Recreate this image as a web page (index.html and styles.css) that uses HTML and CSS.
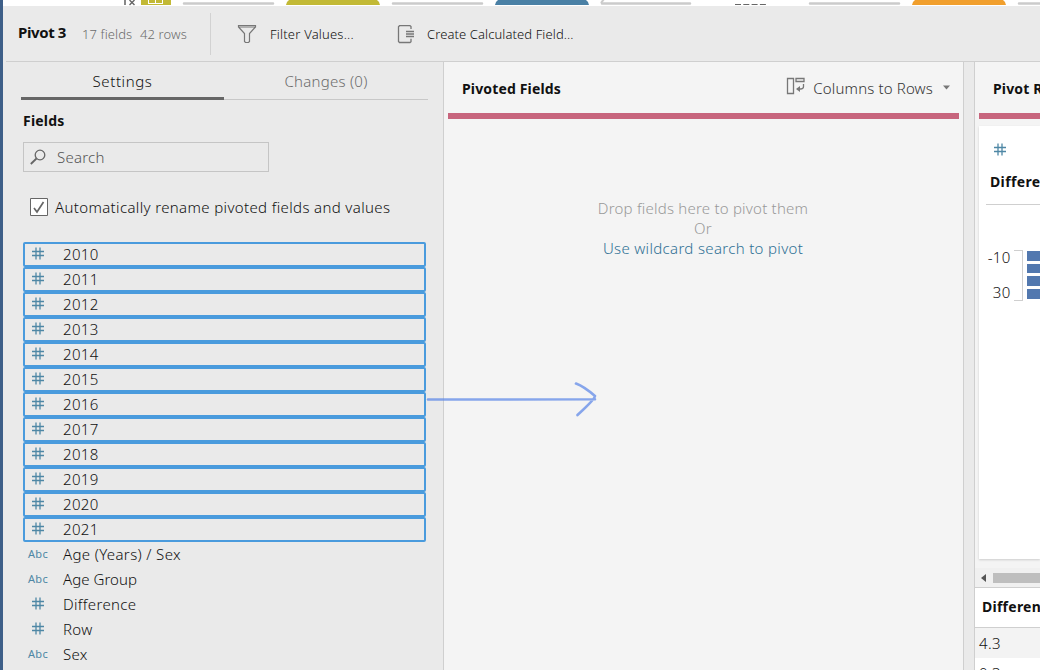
FILE: index.html
```html
<!DOCTYPE html>
<html lang="en">
<head>
<meta charset="utf-8">
<title>Pivot 3</title>
<link rel="stylesheet" href="styles.css">
</head>
<body>
<svg class="defs" width="0" height="0">
  <symbol id="hash" viewBox="0 0 14 14"><path d="M1 4.500h12M1 8.500h12M5 .5v12M9 .5v12" fill="none" stroke="#4e87a5" stroke-width="1.300"/></symbol>
</svg>
<div class="app">
  <svg class="flow" width="1037" height="6" viewBox="3 0 1037 6">
    <path d="M125 0v5" stroke="#555" stroke-width="1.400"/><path d="M129.500 5l5-5M134.500 5l-5-5" stroke="#666" stroke-width="1.400" fill="none"/>
    <path d="M141 0h30v5h-30z" fill="#c2b935"/>
    <path d="M148.500 0v4M155.500 0v4M162.500 0v4M148 3.500h15" stroke="#fff" fill="none"/>
    <path d="M184 3.500h89M393 3.500h89M602 3.500h88M810 3.500h89M1019 3.500h40" stroke="#cbcbcb" stroke-width="2.500" stroke-linecap="round"/>
    <path d="M601 3l3-4" stroke="#cbcbcb" stroke-width="2"/>
    <path d="M286 5q0-3 3-5h88q3 2 3 5z" fill="#c2b935"/>
    <path d="M495 5q0-3 3-5h88q3 2 3 5z" fill="#4a80a5"/>
    <path d="M912 5q0-3 3-5h88q3 2 3 5z" fill="#f19f2d"/>
    <path d="M735 4.500h31" stroke="#666" stroke-dasharray="6 2.300"/>
  </svg>
  <header class="toolbar">
    <div class="summary"><b class="title">Pivot 3</b><span class="count fields-count">17 fields</span><span class="count rows-count">42 rows</span></div>
    <div class="action filter">
      <svg width="20" height="20" viewBox="0 0 20 20"><path d="M1.500 1.500h17v1.500l-6 6.500v8l-1 1h-3l-1-1v-8l-6-6.500zM2 3h16" fill="none" stroke="#777" stroke-width="1.200"/></svg>
      <span class="filter-text">Filter Values...</span>
    </div>
    <div class="action calc">
      <svg width="18" height="20" viewBox="0 0 18 20"><path d="M14 5V2.500l-1-.8H2.500l-1 1v14.800l1 1H13l1-.8v-3M9 7.500h8M9 10h8M9 12.500h8" fill="none" stroke="#777" stroke-width="1.300"/></svg>
      <span class="calc-text">Create Calculated Field...</span>
    </div>
  </header>
  <main class="workspace">
    <section class="settings">
      <nav class="tabs"><span class="tab active"><span>Settings</span></span><span class="tab changes"><span>Changes (0)</span></span></nav>
      <h2 class="fields-title"><span>Fields</span></h2>
      <div class="search"><svg width="16" height="16" viewBox="0 0 16 16"><circle cx="10" cy="6" r="4.800" fill="none" stroke="#666" stroke-width="1.300"/><path d="M6.500 9.500L.8 15" stroke="#666" stroke-width="1.800"/></svg><span>Search</span></div>
      <div class="rename"><svg width="18" height="18" viewBox="0 0 18 18"><path d="M.5.500h17v17H.5z" fill="#fff" stroke="#666"/><path d="M4 10l3 4 6.500-10" fill="none" stroke="#666" stroke-width="1.700"/></svg><span>Automatically rename pivoted fields and values</span></div>
      <ul class="fields">
        <li class="selected"><svg><use href="#hash"/></svg><span>2010</span></li>
        <li class="selected"><svg><use href="#hash"/></svg><span>2011</span></li>
        <li class="selected"><svg><use href="#hash"/></svg><span>2012</span></li>
        <li class="selected"><svg><use href="#hash"/></svg><span>2013</span></li>
        <li class="selected"><svg><use href="#hash"/></svg><span>2014</span></li>
        <li class="selected"><svg><use href="#hash"/></svg><span>2015</span></li>
        <li class="selected"><svg><use href="#hash"/></svg><span>2016</span></li>
        <li class="selected"><svg><use href="#hash"/></svg><span>2017</span></li>
        <li class="selected"><svg><use href="#hash"/></svg><span>2018</span></li>
        <li class="selected"><svg><use href="#hash"/></svg><span>2019</span></li>
        <li class="selected"><svg><use href="#hash"/></svg><span>2020</span></li>
        <li class="selected"><svg><use href="#hash"/></svg><span>2021</span></li>
        <li><i>Abc</i><span class="age-sex">Age (Years) / Sex</span></li>
        <li><i>Abc</i><span class="age-group">Age Group</span></li>
        <li><svg><use href="#hash"/></svg><span class="difference">Difference</span></li>
        <li><svg><use href="#hash"/></svg><span>Row</span></li>
        <li><i>Abc</i><span class="sex">Sex</span></li>
      </ul>
    </section>
    <section class="pivoted">
      <header class="panel-head">
        <b>Pivoted Fields</b>
        <div class="mode">
          <svg width="19" height="18" viewBox="0 0 19 18"><path d="M1.500 1.500h6v15h-6zM10 1.500h8v3h-8zM17.500 7v2.500q0 2.500-3 2.500h-3" fill="none" stroke="#777" stroke-width="1.300"/><path d="M10 12l4-3v6z" fill="#777"/></svg>
          <span>Columns to Rows</span>
          <svg class="caret" width="7" height="5" viewBox="0 0 7 5"><path d="M0 .5h7L3.500 4.500z" fill="#777"/></svg>
        </div>
      </header>
      <div class="accent"></div>
      <div class="drop"><span>Drop fields here to pivot them</span><span>Or</span><a>Use wildcard search to pivot</a></div>
    </section>
    <section class="results">
      <header class="panel-head"><b class="results-title">Pivot Results</b></header>
      <div class="accent"></div>
      <div class="card">
        <svg class="card-icon"><use href="#hash"/></svg>
        <b class="card-title">Difference</b>
        <div class="histogram">
          <div class="axis"><span>-10</span><span>30</span></div>
          <div class="bracket"></div>
          <div class="bars"><i></i><i></i><i></i><i></i></div>
        </div>
      </div>
      <div class="scroll"><svg width="5" height="8" viewBox="0 0 5 8"><path d="M5 0v8L0 4z" fill="#555"/></svg><div class="thumb"></div></div>
      <div class="grid-head"><b>Difference</b></div>
      <div class="grid-row shaded">4.3</div>
      <div class="grid-row">0.3</div>
    </section>
  </main>
  <svg class="arrow" width="174" height="40" viewBox="426 378 174 40"><path d="M428 399.500h70l97-.3M576 383.500q8 3 19 12.500q0 3-17.500 19" fill="none" stroke="#5b86e8" stroke-opacity=".72" stroke-width="2.600" stroke-linecap="round"/></svg>
</div>
</body>
</html>
```
FILE: styles.css
```css
* { box-sizing: border-box; }
body { margin: 0; font-family: "Noto Sans", sans-serif; font-size: 15px; font-weight: 300; color: #111; }
b { font-weight: 700; }
.defs { position: absolute; }
.app { width: 1040px; height: 670px; overflow: hidden; display: flex; flex-direction: column; border-left: 3px solid #3e5f88; background: #eaeaea; position: relative; }
.flow { display: block; flex: none; background: #fff; }
.toolbar { height: 55px; flex: none; display: flex; white-space: nowrap; }
.summary { width: 208px; height: 42px; margin-top: 7px; padding-left: 15px; border-right: 1px solid #d2d2d2; display: flex; line-height: 40px; }
.title { width: 64px; color: #111; font-size: 15px; line-height: 38px; letter-spacing: -.4px; }
.count { font-size: 13px; color: #6c6c6c; line-height: 43px; letter-spacing: .1px; }
.fields-count { width: 58px; }
.action { display: flex; font-size: 13px; line-height: 56px; }
.action svg { margin-top: 18px; }
.filter { padding-left: 26px; width: 186px; gap: 13px; letter-spacing: .2px; }
.calc { gap: 12px; letter-spacing: .1px; }
.workspace { flex: 1; min-height: 0; margin-left: 3px; border-top: 1px solid #cfcfcf; display: flex; }
.settings { width: 437px; padding: 0 15px; flex: none; white-space: nowrap; }
.tabs { display: flex; height: 38px; line-height: 38px; text-align: center; }
.tab { width: 203px; flex: none; color: #6c6c6c; border-bottom: 1px solid #c8c8c8; letter-spacing: .25px; }
.tab.changes { width: 204px; }
.tab.active { color: #111; border-bottom: 3px solid #666; letter-spacing: .6px; }
.fields-title { margin: 11px 0 0 2px; height: 20px; line-height: 20px; font-size: 14px; letter-spacing: .2px; color: #111; }
.search { margin: 11px 0 0 2px; width: 246px; height: 30px; border: 1px solid #c5c5c5; display: flex; align-items: center; padding-left: 6px; gap: 11px; color: #555; letter-spacing: .25px; }
.rename { display: flex; align-items: center; height: 22px; margin: 24px 0 0 9px; gap: 7px; letter-spacing: .36px; }
.fields { list-style: none; margin: 24px 0 0 2px; padding: 0; width: 403px; letter-spacing: .35px; }
.fields li { height: 25px; padding-left: 6px; display: flex; line-height: 25px; align-items: center; border: 2px solid transparent; border-width: 0 2px; }
.fields .selected { border: 2px solid #4a9bdd; border-radius: 2px; }
.fields svg { width: 14px; height: 14px; margin-right: 18px; margin-top: -1px; flex: none; }
.fields i { font-style: normal; font-weight: 400; font-size: 11px; letter-spacing: .3px; color: #4e87a5; width: 35px; margin: -2px 0 0 -3px; flex: none; }
.fields .age-group { letter-spacing: .05px; }
.panel-head { height: 51px; display: flex; align-items: center; padding: 2px 13px 0 18px; justify-content: space-between; }
.panel-head b, .grid-head b, .card-title { color: #111; font-size: 14px; white-space: nowrap; }
.panel-head b { margin-top: -1px; letter-spacing: .15px; }
.pivoted { width: 521px; flex: none; background: #f4f4f4; border: 1px solid #cfcfcf; border-width: 0 1px; }
.accent { height: 6px; margin: 0 4px; background: #c7657d; }
.mode { display: flex; align-items: center; gap: 8px; color: #333; margin-top: -1px; letter-spacing: .15px; }
.mode svg { margin-top: -4px; }
.mode .caret { margin: -2px 0 0 2px; }
.drop { margin-top: 79px; padding-right: 1px; display: flex; flex-direction: column; align-items: center; line-height: 20px; color: #999; letter-spacing: .22px; }
.drop a { color: #2f7095; letter-spacing: .33px; }
.results { margin-left: 10px; flex: 1; min-width: 0; overflow: hidden; background: #f4f4f4; border-left: 1px solid #cfcfcf; }
.results .accent { margin-right: 0; }
.card { height: 433px; margin: 7px 0 0 4px; padding: 17px 0 0 7px; background: #fff; box-shadow: 0 1px 2px #ccc; }
.card-icon { display: block; width: 14px; height: 14px; margin-left: 7px; }
.card-title { display: block; height: 48px; line-height: 50px; padding-left: 4px; letter-spacing: .35px; border-bottom: 1px solid #cfcfcf; }
.histogram { display: flex; margin-top: 45px; height: 50px; }
.axis { width: 26px; margin-top: -3px; text-align: right; line-height: 20px; display: grid; row-gap: 15px; align-content: start; letter-spacing: .25px; }
.bracket { width: 9px; margin-left: 4px; border: 1px solid #cfcfcf; border-left: 0; height: 51px; }
.bars { margin-left: 4px; padding-top: 1px; display: grid; gap: 3px; align-content: start; }
.bars i { display: block; width: 13px; height: 9.700px; background: #5278af; }
.scroll { height: 19px; margin-top: 9px; background: #f0f0f0; display: flex; align-items: center; padding-left: 6px; gap: 7px; }
.thumb { flex: 1; height: 10px; background: #bebebe; }
.grid-head { height: 41px; line-height: 37px; background: #fff; border: 1px solid #cfcfcf; border-width: 1px 0; padding-left: 7px; letter-spacing: .25px; }
.grid-row { height: 30px; line-height: 31px; padding-left: 4px; background: #fff; letter-spacing: .35px; }
.grid-row.shaded { background: #f3f3f3; }
.arrow { position: absolute; left: 423px; top: 378px; }
```
